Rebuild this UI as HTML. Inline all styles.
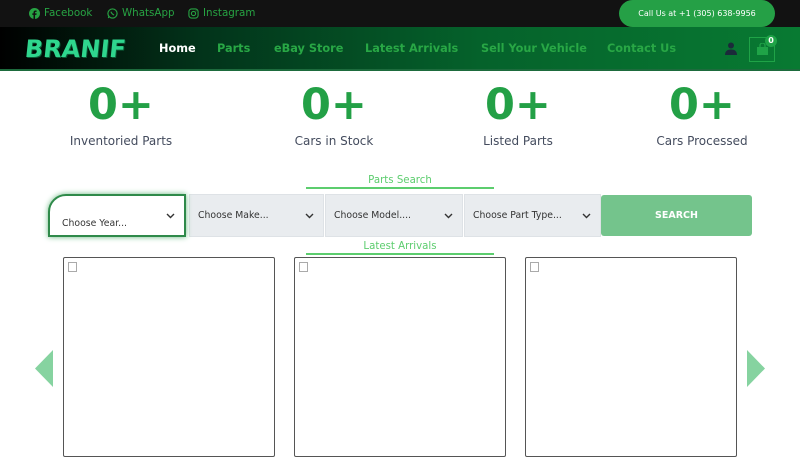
<!DOCTYPE html>
<html><head><meta charset="utf-8"><style>
*{margin:0;padding:0;box-sizing:border-box}
body{width:800px;height:450px;overflow:hidden;background:#fff;font-family:"DejaVu Sans","Liberation Sans",sans-serif;position:relative}
.top{position:absolute;left:0;top:0;width:800px;height:27px;background:#121212}
.top a{position:absolute;top:7px;font-size:10.3px;color:#27a343;text-decoration:none;display:flex;align-items:center;gap:4px}
.call{position:absolute;left:619px;top:0;width:156px;height:27px;background:#25a046;border-radius:14px;color:#fff;font-size:8px;text-align:center;line-height:27px}
.nav{position:absolute;left:0;top:27px;width:800px;height:44px;background:linear-gradient(90deg,#000 0%,#02331a 25%,#05622b 60%,#087a32 100%);border-bottom:2px solid #1d6b3d}
.logo{position:absolute;left:25px;top:35px;font-size:24px;font-weight:bold;color:#2fd68e;transform:skewX(-6deg);text-shadow:1px 1px 0 #0a5a35}
.n{position:absolute;top:42px;font-size:11.3px;font-weight:bold;color:#28a745}
.stat{position:absolute;top:82px;width:200px;text-align:center}
.stat b{display:block;font-size:43px;color:#23a046;line-height:46px}
.stat i{display:block;font-style:normal;font-size:12px;color:#444c5e;margin-top:6px}
.ttl{position:absolute;left:306px;width:188px;text-align:center;font-size:10.2px;color:#5ccd6e;border-bottom:2px solid #5ccd6e;padding-bottom:1px}
.sel{position:absolute;top:194px;height:43px;background:#e9ecef;border:1px solid #dee2e6;font-size:9.3px;color:#333;padding-left:8px;line-height:41px}
.sel svg{position:absolute;right:9px;top:18px}
.card{position:absolute;top:257px;width:212px;height:200px;border:1px solid #555;border-radius:2px}
.card:before{content:"";position:absolute;left:4px;top:4px;width:7px;height:8px;border:1px solid #aaa}
</style></head><body>
<div class="top">
<a style="left:29px"><svg width="11" height="11" viewBox="0 0 12 12"><circle cx="6" cy="6" r="6" fill="#27a343"/><path d="M6.6 12V7.5h1.5l.2-1.6H6.6V5c0-.5.2-.8.8-.8h.9V2.8c-.2 0-.7-.1-1.3-.1-1.3 0-2.1.8-2.1 2.2v1H3.6v1.6h1.3V12z" fill="#121212"/></svg>Facebook</a>
<a style="left:107px"><svg width="11" height="11" viewBox="0 0 12 12"><circle cx="6" cy="6" r="5" fill="none" stroke="#27a343" stroke-width="1.3"/><path d="M1.5 11l.8-2.5" stroke="#27a343" stroke-width="1.3"/><path d="M4.3 4c.5 1.6 1.6 2.8 3.4 3.6" stroke="#27a343" stroke-width="1.2" fill="none"/></svg>WhatsApp</a>
<a style="left:188px"><svg width="11" height="11" viewBox="0 0 12 12"><rect x="1" y="1" width="10" height="10" rx="3" fill="none" stroke="#27a343" stroke-width="1.2"/><circle cx="6" cy="6" r="2.3" fill="none" stroke="#27a343" stroke-width="1.2"/><circle cx="8.8" cy="3.2" r=".6" fill="#27a343"/></svg>Instagram</a>
<div class="call">Call Us at +1 (305) 638-9956</div>
</div>
<div class="nav"></div>
<div class="logo">BRANIF</div>
<span class="n" style="left:159px;color:#fff">Home</span>
<span class="n" style="left:217px">Parts</span>
<span class="n" style="left:274px">eBay Store</span>
<span class="n" style="left:365px">Latest Arrivals</span>
<span class="n" style="left:481px">Sell Your Vehicle</span>
<span class="n" style="left:607px">Contact Us</span>
<svg style="position:absolute;left:725px;top:42px" width="12" height="13" viewBox="0 0 12 13"><circle cx="6" cy="3.5" r="3" fill="#1b2a3a"/><path d="M0 13c0-4 2.5-5.5 6-5.5s6 1.5 6 5.5z" fill="#1b2a3a"/></svg>
<div style="position:absolute;left:749px;top:37px;width:26px;height:25px;border:1px solid #1fa347"></div>
<svg style="position:absolute;left:756px;top:43px" width="13" height="12" viewBox="0 0 13 12"><path d="M4 4V2.5a2.5 2.5 0 0 1 5 0V4" stroke="#1fa347" fill="none" stroke-width="1.3"/><rect x="1" y="4" width="11" height="8" fill="#1fa347"/></svg>
<div style="position:absolute;left:765px;top:35px;width:12px;height:12px;border-radius:6px;background:#1fa347;color:#fff;font-size:8px;font-weight:bold;text-align:center;line-height:12px">0</div>
<div class="stat" style="left:21px"><b>0+</b><i>Inventoried Parts</i></div>
<div class="stat" style="left:234px"><b>0+</b><i>Cars in Stock</i></div>
<div class="stat" style="left:418px"><b>0+</b><i>Listed Parts</i></div>
<div class="stat" style="left:602px"><b>0+</b><i>Cars Processed</i></div>
<div class="ttl" style="top:175px">Parts Search</div>
<div class="sel" style="left:189px;width:135px">Choose Make...<svg width="9" height="6"><path d="M1 1l3.5 3.5L8 1" stroke="#333" stroke-width="1.4" fill="none"/></svg></div>
<div class="sel" style="left:325px;width:138px">Choose Model....<svg width="9" height="6"><path d="M1 1l3.5 3.5L8 1" stroke="#333" stroke-width="1.4" fill="none"/></svg></div>
<div class="sel" style="left:464px;width:137px">Choose Part Type...<svg width="9" height="6"><path d="M1 1l3.5 3.5L8 1" stroke="#333" stroke-width="1.4" fill="none"/></svg></div>
<div class="sel" style="left:48px;width:138px;background:#fff;border:2px solid #2f8a4a;border-radius:18px 0 0 0;box-shadow:0 0 6px #6ab882;line-height:55px;padding-left:12px">Choose Year...<svg width="9" height="6" style="top:17px"><path d="M1 1l3.5 3.5L8 1" stroke="#333" stroke-width="1.4" fill="none"/></svg></div>
<div style="position:absolute;left:601px;top:195px;width:151px;height:41px;background:#74c48c;border-radius:3px;color:#fff;font-size:9.5px;font-weight:bold;text-align:center;line-height:41px">SEARCH</div>
<div class="ttl" style="top:241px">Latest Arrivals</div>
<div class="card" style="left:63px"></div>
<div class="card" style="left:294px"></div>
<div class="card" style="left:525px"></div>
<svg style="position:absolute;left:35px;top:350px" width="18" height="37"><path d="M18 0V37L0 18.5z" fill="#86d3a0"/></svg>
<svg style="position:absolute;left:747px;top:350px" width="18" height="37"><path d="M0 0V37L18 18.5z" fill="#86d3a0"/></svg>
</body></html>
